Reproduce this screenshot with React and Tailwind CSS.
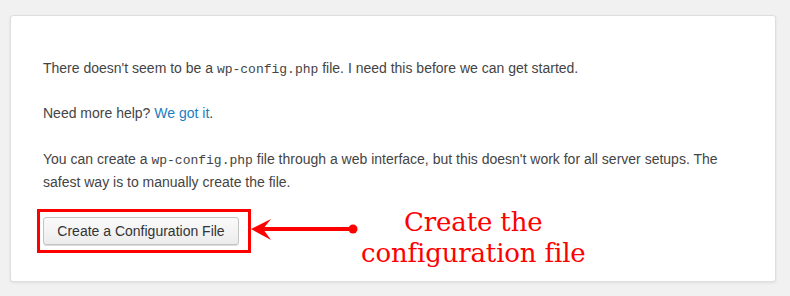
import React from 'react'

// Flèche pointant vers le bouton (annotation)
function ArrowLeft() {
  return (
    <svg width="107" height="24" viewBox="0 0 107 24" className="shrink-0">
      <path d="M0 12 L20 2 L12 12 L20 23 Z" fill="#ff0000" />
      <line x1="10" y1="12" x2="102" y2="12" stroke="#ff0000" strokeWidth="4" />
      <circle cx="102" cy="12" r="4.5" fill="#ff0000" />
    </svg>
  )
}

function Code({ children }) {
  return (
    <code className="text-[13px] leading-none font-['Liberation_Mono',monospace]">{children}</code>
  )
}

export default function App() {
  return (
    <div className="w-[790px] h-[296px] bg-[#f1f1f1] pt-[15px] pl-[10px] overflow-hidden">
      <div className="w-[766px] h-[267px] bg-white border border-[#dedede] rounded-[3px] shadow-[0_1px_3px_rgba(0,0,0,0.08)] pt-[41px] px-[32px] font-['Liberation_Sans',Arial,sans-serif] text-[14px] leading-[22px] text-[#444]">
        <p className="mb-[23px]">
          There doesn't seem to be a <Code>wp-config.php</Code> file. I need this before we can get started.
        </p>
        <p className="mb-[24px]">
          Need more help? <a className="text-[#1a7dc0]" href="#">We got it</a>.
        </p>
        <p className="mb-[15px] leading-[23px]">
          You can create a <Code>wp-config.php</Code> file through a web interface, but this doesn't work for all server setups. The safest way is to manually create the file.
        </p>

        <div className="flex items-start -ml-[6px]">
          <div className="border-[3px] border-[#ff0000] pt-[5px] pb-[5px] pl-[3px] pr-[9px] shrink-0">
            <button className="h-[28px] w-[196px] rounded-[3px] border border-[#c4c4c4] bg-gradient-to-b from-[#fafafa] to-[#ececec] text-[#333] text-[14px] shadow-[0_1px_0_#ddd]">
              Create a Configuration File
            </button>
          </div>
          <div className="mt-[8px]">
            <ArrowLeft />
          </div>
          <div className="-mt-[2px] ml-[3px] text-center text-[#ff0000] font-['DejaVu_Serif',serif] text-[26px] leading-[31px] tracking-[-0.15px]">
            Create the<br />configuration file
          </div>
        </div>
      </div>
    </div>
  )
}
